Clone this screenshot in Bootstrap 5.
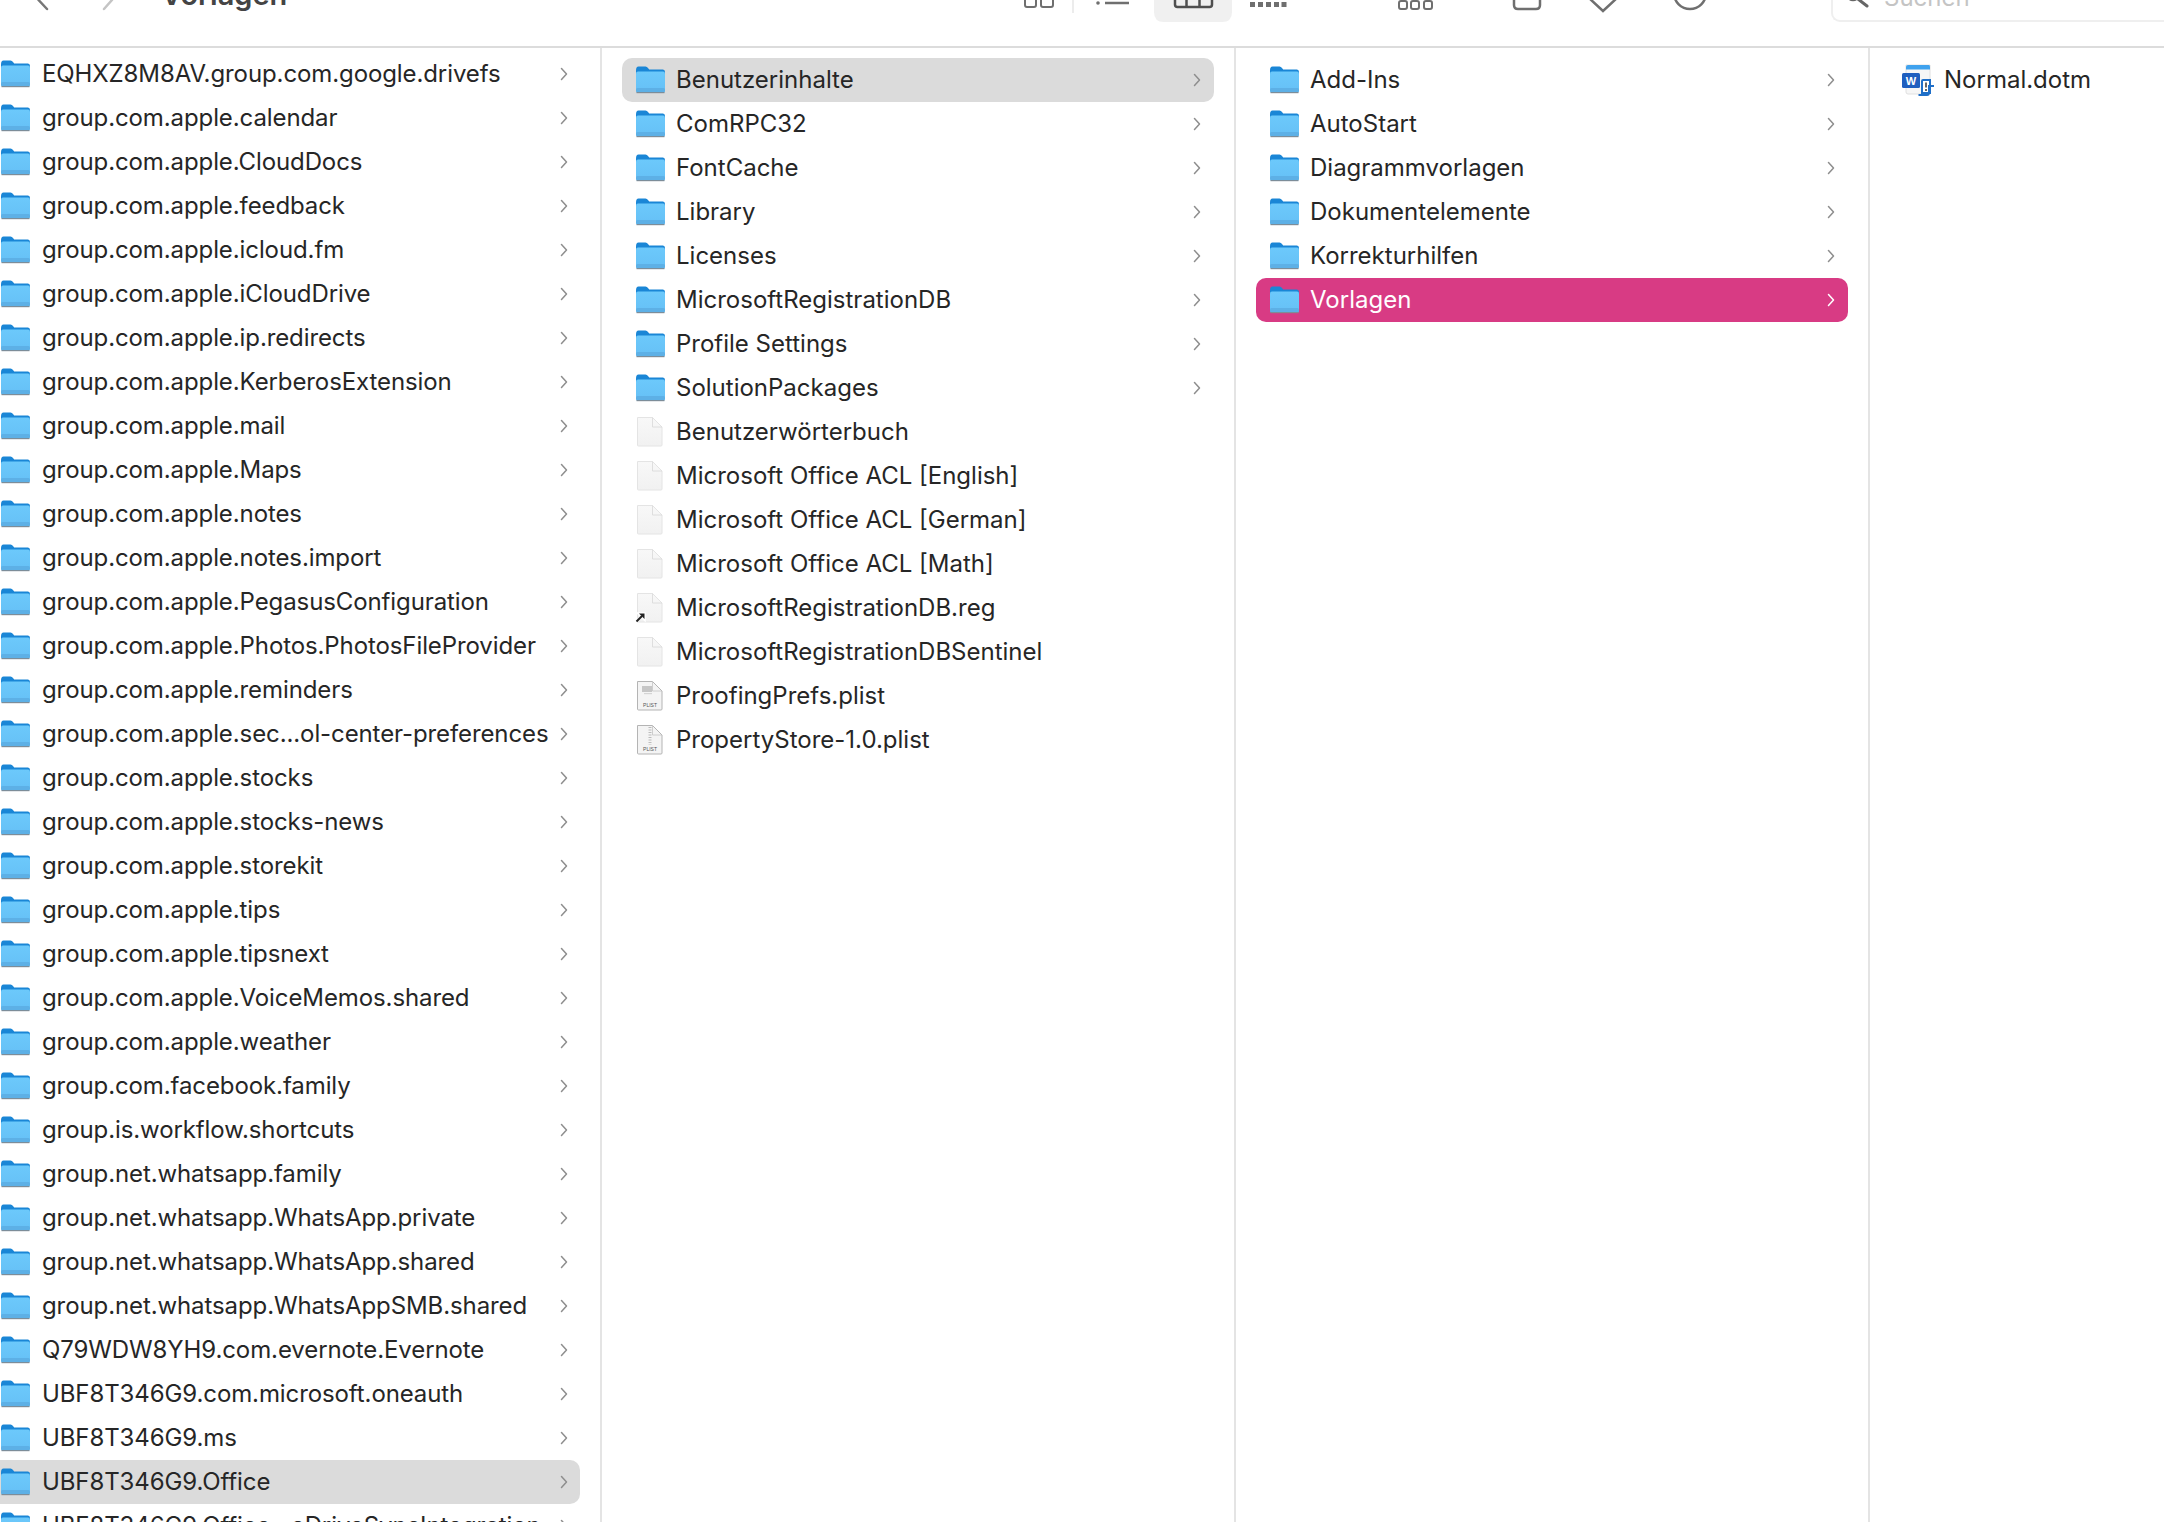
<!DOCTYPE html>
<html lang="de"><head><meta charset="utf-8"><title>Vorlagen</title>
<link href="https://cdn.jsdelivr.net/npm/bootstrap@5.3.0/dist/css/bootstrap.min.css" rel="stylesheet">
<style>
html,body{height:100%;overflow:hidden;background:#fff}
body{font-family:"Inter","Liberation Sans",sans-serif;font-size:24px;color:#262626}
.finder{height:1522px;width:2164px;overflow:hidden}
.tbar{height:48px;border-bottom:2px solid #dcdcdc;flex:none}
.tbar svg{display:block}
.tdraw{position:absolute;left:0;top:0}
.ttl{position:absolute;left:161px;top:-23px;font-size:29px;font-weight:600;color:#444;line-height:36px}
.scrwrap{position:absolute;left:1831px;top:-3px}
.panes{height:1474px}
.pane{flex:none;border-right:2px solid #e4e4e4;overflow:hidden}
.p1{width:602px;padding:4px 20px 0 0}
.p2,.p3{width:634px;padding:10px 20px 0 20px}
.p4{flex:1;border-right:0;padding:10px 0 0 19px}
.fitem{height:44px;border-radius:10px;padding-left:13px;padding-right:13px;white-space:nowrap}
.p1 .fitem{padding-left:0;padding-right:12px;border-radius:0 10px 10px 0;letter-spacing:-.1px}
.fname{margin-left:10px;flex:1}
.p1 .fname{margin-left:11px}
.cur{background:#dbdbdb}
.act{background:#d83b84;color:#fff}
.ico{flex:none;width:31px;height:30px}
.icow{flex:none;width:32px;height:32px}
.chev{flex:none;width:8px;height:14px;color:#8e8e8e}
.act .chev{color:#fff}
.scrh{width:340px;height:25px;border:2px solid #efefef;border-top:0;border-right:0;border-radius:0 0 0 9px;color:#c4c4c4;font-size:24px;line-height:2px;padding-left:51px;overflow:hidden}
</style></head><body>
<svg width="0" height="0" class="position-absolute">
<defs>
<linearGradient id="fg" x1="0" y1="0" x2="0" y2="1"><stop offset="0" stop-color="#6cc9fb"/><stop offset="1" stop-color="#66c0f6"/></linearGradient>
<linearGradient id="pg" x1="0" y1="0" x2="0" y2="1"><stop offset="0" stop-color="#f8f8f8"/><stop offset="1" stop-color="#f1f1f1"/></linearGradient>
<symbol id="folder" viewBox="0 0 31 30">
<path d="M1 5.500Q1 1.500 3.500 1.500H10.500Q12 1.500 13 3L14.200 4.500H28Q30 4.500 30 7V11H1Z" fill="#1a86d6"/>
<rect x="1" y="6.500" width="29" height="20.500" rx="2" fill="url(#fg)"/>
<rect x="1" y="23" width="29" height="4.500" rx="1.500" fill="#5db0e6"/>
<rect x="1.500" y="27" width="28" height="1.200" fill="#7d8d99"/>
</symbol>
<symbol id="blank" viewBox="0 0 31 30">
<path d="M2.500 .5H17.500L27 10V28Q27 29 26 29H3.500Q2.500 29 2.500 28Z" fill="url(#pg)" stroke="#e4e4e4" stroke-width="1"/>
<path d="M17.500 .5V10H27" fill="none" stroke="#d8d8d8" stroke-width=".8"/>
</symbol>
<symbol id="plist" viewBox="0 0 31 30">
<path d="M2.500 .5H17.500L27 10V28Q27 29 26 29H3.500Q2.500 29 2.500 28Z" fill="#f4f4f4" stroke="#b4b4b4" stroke-width="1"/>
<path d="M17.500 .5V10H27" fill="none" stroke="#c4c4c4" stroke-width=".8"/>
</symbol>
<symbol id="chevron" viewBox="0 0 8 14"><path d="M1.500 1.500L6.500 7L1.500 12.500" fill="none" stroke="currentColor" stroke-width="1.500" stroke-linecap="round" stroke-linejoin="round"/></symbol>
</defs></svg>
<div class="finder d-flex flex-column">
<div class="tbar d-flex position-relative" id="tb"></div>
<div class="panes d-flex">
<div class="pane p1" id="c1"></div>
<div class="pane p2" id="c2"></div>
<div class="pane p3" id="c3"></div>
<div class="pane p4">
<div class="fitem d-flex align-items-center">
<svg class="icow" viewBox="0 0 32 32"><path d="M4 1H28V27Q28 30 26 30H6Q4 30 4 28Z" fill="#f6f6f6" stroke="#e0e0e0"/><path d="M4 3Q4 1 6 1H27Q28 1 28 3V5.500H4Z" fill="#3fa2ee"/><rect x="0" y="9" width="18" height="15" rx="1.500" fill="#1f5fbf"/><path d="M20 29V17Q20 16 21 16H28V29Z" fill="#fff" stroke="#1f6fc8" stroke-width="2"/><path d="M16.500 31H25Q27 31 27 28.500V22H32" fill="none" stroke="#1f6fc8" stroke-width="2"/><rect x="23" y="18.500" width="2" height="5" fill="#666"/><rect x="23" y="25" width="2" height="2" fill="#666"/><text x="9" y="21" text-anchor="middle" font-size="11" font-weight="700" fill="#fff" font-family="Liberation Sans">W</text></svg>
<span class="fname">Normal.dotm</span></div>
</div>
</div></div>
<script>
const c1=["EQHXZ8M8AV.group.com.google.drivefs","group.com.apple.calendar","group.com.apple.CloudDocs","group.com.apple.feedback","group.com.apple.icloud.fm","group.com.apple.iCloudDrive","group.com.apple.ip.redirects","group.com.apple.KerberosExtension","group.com.apple.mail","group.com.apple.Maps","group.com.apple.notes","group.com.apple.notes.import","group.com.apple.PegasusConfiguration","group.com.apple.Photos.PhotosFileProvider","group.com.apple.reminders","group.com.apple.sec...ol-center-preferences","group.com.apple.stocks","group.com.apple.stocks-news","group.com.apple.storekit","group.com.apple.tips","group.com.apple.tipsnext","group.com.apple.VoiceMemos.shared","group.com.apple.weather","group.com.facebook.family","group.is.workflow.shortcuts","group.net.whatsapp.family","group.net.whatsapp.WhatsApp.private","group.net.whatsapp.WhatsApp.shared","group.net.whatsapp.WhatsAppSMB.shared","Q79WDW8YH9.com.evernote.Evernote","UBF8T346G9.com.microsoft.oneauth","UBF8T346G9.ms","UBF8T346G9.Office","UBF8T346G9.Office...eDriveSyncIntegration"];
const c2=[["Benutzerinhalte","folder"],["ComRPC32","folder"],["FontCache","folder"],["Library","folder"],["Licenses","folder"],["MicrosoftRegistrationDB","folder"],["Profile Settings","folder"],["SolutionPackages","folder"],["Benutzerwörterbuch","blank"],["Microsoft Office ACL [English]","blank"],["Microsoft Office ACL [German]","blank"],["Microsoft Office ACL [Math]","blank"],["MicrosoftRegistrationDB.reg","alias"],["MicrosoftRegistrationDBSentinel","blank"],["ProofingPrefs.plist","plist"],["PropertyStore-1.0.plist","plist2"]];
const c3=["Add-Ins","AutoStart","Diagrammvorlagen","Dokumentelemente","Korrekturhilfen","Vorlagen"];
function row(n,ic,cls){
 const chev=ic==="folder"?`<svg class="chev"><use href="#chevron"/></svg>`:"";
 const lbl=`<text x="15" y="26" text-anchor="middle" font-size="5" fill="#555" font-family="Liberation Sans">PLIST</text>`;
 let icon;
 if(ic==="alias")icon=`<svg class="ico" viewBox="0 0 31 30"><use href="#blank"/><path d="M1.500 28.500L8 22M3.500 20.500H9.500V26.500Z" stroke="#fff" stroke-width="2.500" fill="#fff"/><path d="M1.500 28.500L7 23" stroke="#222" stroke-width="2" fill="none"/><path d="M4 20.500H9.500V26Z" fill="#222"/></svg>`;
 else if(ic==="plist")icon=`<svg class="ico" viewBox="0 0 31 30"><use href="#plist"/><rect x="7" y="5" width="10" height="6" fill="#c6c6c6"/><rect x="9" y="12" width="8" height="1.200" fill="#d4d4d4"/>${lbl}</svg>`;
 else if(ic==="plist2")icon=`<svg class="ico" viewBox="0 0 31 30"><use href="#plist"/><path d="M15 2V20" stroke="#bcbcbc" stroke-width="3" stroke-dasharray="1 1.500"/>${lbl}</svg>`;
 else icon=`<svg class="ico"><use href="#${ic}"/></svg>`;
 return `<div class="fitem d-flex align-items-center ${cls||""}">${icon}<span class="fname">${n}</span>${chev}</div>`;
}
document.getElementById("c1").innerHTML=c1.map((n,i)=>row(n,"folder",i==32?"cur":"")).join("");
document.getElementById("c2").innerHTML=c2.map((x,i)=>row(x[0],x[1],i==0?"cur":"")).join("");
document.getElementById("c3").innerHTML=c3.map((n,i)=>row(n,"folder",i==5?"act":"")).join("");
document.getElementById("tb").innerHTML=`
<svg width="2164" height="46" class="tdraw" fill="none" stroke="#6f6f6f" stroke-width="2.500">
<path d="M47 -9L38.500 0L47 9" stroke-linecap="round" stroke-linejoin="round" stroke="#777"/>
<path d="M104 -9L112 0L104 9" stroke-linecap="round" stroke-linejoin="round" stroke="#c4c4c4"/>
<rect x="1025" y="-8" width="11" height="15" rx="2" stroke-width="2"/><rect x="1041" y="-8" width="12" height="15" rx="2" stroke-width="2"/>
<path d="M1073 -8V13" stroke="#e6e6e6" stroke-width="1.500"/>
<path d="M1154 -5H1232V12Q1232 22 1222 22H1164Q1154 22 1154 12Z" fill="#f0f0f0" stroke="none"/>
<rect x="1175" y="-7" width="37" height="14" rx="2.500" stroke="#4f4f4f"/><path d="M1186.500 0V7M1199.500 0V7" stroke="#4f4f4f"/>
<path d="M1105 3H1129"/><circle cx="1098" cy="3" r="1.800" fill="#6f6f6f" stroke="none"/>
<path d="M1250 4.500H1255M1258 4.500H1263M1266 4.500H1271M1274 4.500H1279M1281.500 4.500H1286.500" stroke-width="5"/>
<rect x="1399" y="1" width="8" height="8" rx="2" stroke-width="2"/><rect x="1411" y="1" width="8" height="8" rx="2" stroke-width="2"/><rect x="1424" y="1" width="8" height="8" rx="2" stroke-width="2"/>
<path d="M1514 -6V5Q1514 9 1518 9H1536Q1540 9 1540 5V-6"/>
<path d="M1589 -2L1603 11L1617 -2"/>
<circle cx="1690" cy="-7" r="16"/>
<circle cx="1853" cy="-6" r="6" stroke="#666" stroke-width="2.500"/><path d="M1858 -1L1867 6" stroke="#666" stroke-width="3" stroke-linecap="round"/>
</svg>
<div class="ttl">Vorlagen</div>
<div class="scrwrap"><div class="scrh">Suchen</div></div>`;
</script>
</body></html>
